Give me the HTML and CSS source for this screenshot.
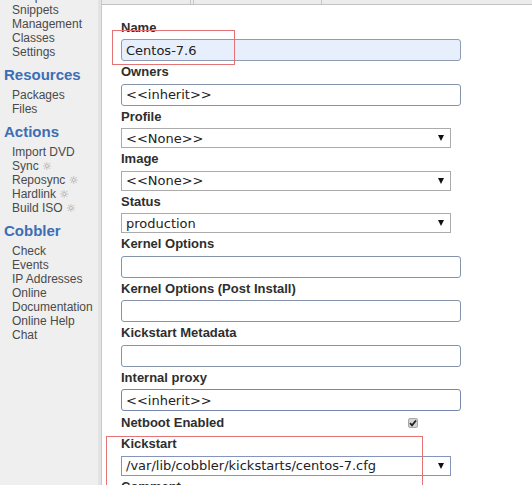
FILE: index.html
```html
<!DOCTYPE html>
<html>
<head>
<meta charset="utf-8">
<link rel="stylesheet" href="styles.css">
</head>
<body>
<div class="page">
  <nav class="sidebar">
    <ul class="menu menu-first">
      <li>Templates</li>
      <li>Snippets</li>
      <li>Management</li>
      <li>Classes</li>
      <li>Settings</li>
    </ul>
    <h2 class="heading">Resources</h2>
    <ul class="menu">
      <li>Packages</li>
      <li>Files</li>
    </ul>
    <h2 class="heading">Actions</h2>
    <ul class="menu">
      <li>Import DVD</li>
      <li>Sync <span class="sun">☼</span></li>
      <li>Reposync <span class="sun">☼</span></li>
      <li>Hardlink <span class="sun">☼</span></li>
      <li>Build ISO <span class="sun">☼</span></li>
    </ul>
    <h2 class="heading">Cobbler</h2>
    <ul class="menu">
      <li>Check</li>
      <li>Events</li>
      <li>IP Addresses</li>
      <li>Online</li>
      <li>Documentation</li>
      <li>Online Help</li>
      <li>Chat</li>
    </ul>
  </nav>
  <main class="main">
    <div class="tabs">
      <span class="tab tab-a"></span>
      <span class="tab tab-b"></span>
      <span class="tab tab-c"></span>
    </div>
    <form class="form">
      <div class="field">
        <label class="label">Name</label>
        <input class="text autofill" type="text" value="Centos-7.6">
      </div>
      <div class="field">
        <label class="label">Owners</label>
        <input class="text" type="text" value="&lt;&lt;inherit&gt;&gt;">
      </div>
      <div class="field field-select">
        <label class="label">Profile</label>
        <div class="select"><span>&lt;&lt;None&gt;&gt;</span><span class="arrow"></span></div>
      </div>
      <div class="field field-select">
        <label class="label">Image</label>
        <div class="select"><span>&lt;&lt;None&gt;&gt;</span><span class="arrow"></span></div>
      </div>
      <div class="field field-select">
        <label class="label">Status</label>
        <div class="select"><span>production</span><span class="arrow"></span></div>
      </div>
      <div class="field">
        <label class="label">Kernel Options</label>
        <input class="text" type="text" value="">
      </div>
      <div class="field">
        <label class="label">Kernel Options (Post Install)</label>
        <input class="text" type="text" value="">
      </div>
      <div class="field">
        <label class="label">Kickstart Metadata</label>
        <input class="text" type="text" value="">
      </div>
      <div class="field">
        <label class="label">Internal proxy</label>
        <input class="text blue" type="text" value="&lt;&lt;inherit&gt;&gt;">
      </div>
      <div class="check-row">
        <label class="label">Netboot Enabled</label>
        <span class="checkbox"><svg width="8" height="8" viewBox="0 0 8 8"><path d="M1 4.2 L3 6.3 L7 1.5" fill="none" stroke="#222" stroke-width="1.8"/></svg></span>
      </div>
      <div class="field field-select">
        <label class="label">Kickstart</label>
        <div class="select select-blue"><span>/var/lib/cobbler/kickstarts/centos-7.cfg</span><span class="arrow"></span></div>
      </div>
      <div class="field">
        <label class="label">Comment</label>
      </div>
    </form>
  </main>
  <div class="mark mark-name"></div>
  <div class="mark mark-ks"></div>
</div>
</body>
</html>
```

FILE: styles.css
```css
html, body {
  margin: 0;
  padding: 0;
  background: #ffffff;
  overflow: hidden;
}

.page {
  position: relative;
  display: flex;
  width: 532px;
  height: 485px;
  overflow: hidden;
  font-family: "Liberation Sans", Arial, sans-serif;
}

.sidebar {
  width: 98px;
  flex: none;
  background: #efefef;
  border-right: 3px solid #e3e3e3;
  box-shadow: 1px 0 0 #c9c9c9;
  color: #4a4a4a;
  font-size: 12px;
}

.menu {
  list-style: none;
  margin: 0;
  padding: 0 0 0 12px;
}

.menu li {
  line-height: 14px;
  height: 14px;
  white-space: nowrap;
}

.menu-first {
  margin-top: -11px;
}

.sun {
  font-family: "DejaVu Sans", sans-serif;
  font-size: 11px;
  color: #a0a0a0;
}

.heading {
  margin: 6px 0 3px 0;
  padding-left: 4px;
  font-size: 15px;
  line-height: 20px;
  font-weight: bold;
  color: #3c6eb4;
}

.main {
  flex: 1;
  margin-left: 1px;
  display: flex;
  flex-direction: column;
  min-width: 0;
}

.tabs {
  position: relative;
  height: 4px;
  flex: none;
  background: #ececec;
  border-bottom: 1px solid #c2c2c2;
}

.tab {
  position: absolute;
  top: 0;
  height: 4px;
  width: 1px;
  background: #c6c6c6;
}
.tab-a { left: 88px; }
.tab-b { left: 91px; }
.tab-c { left: 219px; }

.form {
  display: flex;
  flex-direction: column;
  padding: 14.5px 0 0 19px;
}

.field {
  display: flex;
  flex-direction: column;
  gap: 3.5px;
  margin-bottom: 3px;
}

.label {
  font-family: "Liberation Sans", Arial, sans-serif;
  font-weight: bold;
  font-size: 13px;
  line-height: 16px;
  height: 16px;
  color: #2e2e2e;
  white-space: nowrap;
}

.text {
  box-sizing: border-box;
  width: 340px;
  height: 22px;
  margin: 0;
  padding: 0 4px;
  border: 1px solid #8593ab;
  border-radius: 3px;
  background: #ffffff;
  font-family: "DejaVu Sans", Verdana, sans-serif;
  font-size: 13px;
  color: #222222;
  outline: none;
}

.text.autofill {
  background: #e8effc;
  border-color: #8e9cb4;
}

.text.blue {
  border-color: #7688b0;
}

.select {
  box-sizing: border-box;
  width: 330px;
  height: 20px;
  padding: 0 6px 0 4px;
  border: 1px solid #ababab;
  background: #ffffff;
  display: flex;
  align-items: center;
  justify-content: space-between;
  font-family: "DejaVu Sans", Verdana, sans-serif;
  font-size: 13px;
  color: #222222;
  white-space: nowrap;
}

.select-blue {
  border-color: #8494bd;
}

.arrow {
  width: 0;
  height: 0;
  border-left: 3.5px solid transparent;
  border-right: 3.5px solid transparent;
  border-top: 6px solid #111111;
}

.check-row {
  display: flex;
  align-items: center;
  justify-content: space-between;
  width: 297px;
  height: 16px;
  margin-bottom: 5.5px;
  padding-top: 0.5px;
}

.checkbox {
  box-sizing: border-box;
  width: 10px;
  height: 10px;
  border: 1px solid #a8a8a8;
  border-radius: 2px;
  background: #d4d4d4;
  display: flex;
  align-items: center;
  justify-content: center;
}

.mark {
  position: absolute;
  box-sizing: border-box;
  border: 1.5px solid #e57373;
}

.mark-name {
  left: 112px;
  top: 30px;
  width: 123px;
  height: 35px;
}

.mark-ks {
  left: 106px;
  top: 436px;
  width: 317px;
  height: 70px;
}
```
